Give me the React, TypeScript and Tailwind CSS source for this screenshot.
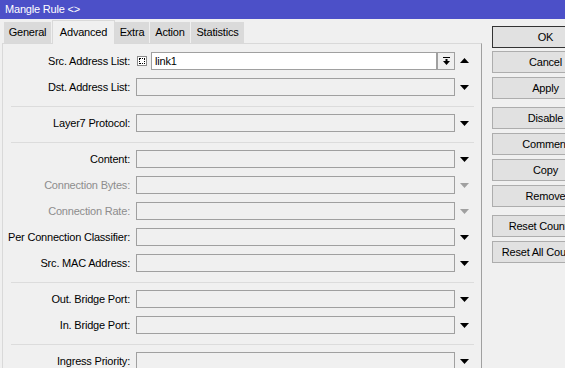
import { FC } from 'react';

type Row = { label: string; disabled?: boolean };

const sections: Row[][] = [
    [{ label: 'Layer7 Protocol:' }],
    [
        { label: 'Content:' },
        { label: 'Connection Bytes:', disabled: true },
        { label: 'Connection Rate:', disabled: true },
        { label: 'Per Connection Classifier:' },
        { label: 'Src. MAC Address:' },
    ],
    [{ label: 'Out. Bridge Port:' }, { label: 'In. Bridge Port:' }],
    [{ label: 'Ingress Priority:' }],
];

const buttons = [
    { text: 'OK', cls: 'mt-[7px] border-[#333333]' },
    { text: 'Cancel', cls: 'mt-[3px] border-[#adadad]' },
    { text: 'Apply', cls: 'mt-[4px] border-[#adadad]' },
    { text: 'Disable', cls: 'mt-[8px] border-[#adadad]' },
    { text: 'Comment', cls: 'mt-[4px] border-[#adadad]' },
    { text: 'Copy', cls: 'mt-[4px] border-[#adadad]' },
    { text: 'Remove', cls: 'mt-[4px] border-[#adadad]' },
    { text: 'Reset Counters', cls: 'mt-[8px] border-[#adadad]' },
    { text: 'Reset All Counters', cls: 'mt-[4px] border-[#adadad]' },
];

const tabs = [
    { text: 'General', w: 'w-[48px]' },
    { text: 'Advanced', w: 'w-[63px]', active: true },
    { text: 'Extra', w: 'w-[35px]' },
    { text: 'Action', w: 'w-[41px]' },
    { text: 'Statistics', w: 'w-[54px]' },
];

const Down: FC<{ grey?: boolean }> = ({ grey }) => (
    <svg width="9" height="5" viewBox="0 0 9 5" className="ml-[5px] mt-[1px] shrink-0">
        <polygon points="0,0 9,0 4.5,5" fill={grey ? '#a0a0a0' : '#000'} />
    </svg>
);

const Separator: FC = () => <div className="ml-[8px] w-[463px] h-px bg-[#dcdcdc] mt-[2px] -mb-px" />;

const Field: FC<Row> = ({ label, disabled }) => (
    <div className="flex items-center h-[18px]">
        <div className={`w-[127px] shrink-0 text-right whitespace-nowrap ${disabled ? 'text-[#8d8d8d]' : 'text-black'}`}>
            {label}
        </div>
        <div className="ml-[6px] w-[319px] shrink-0 h-[18px] border border-[#a0a0a0] bg-[#f0f0f0]" />
        <Down grey={disabled} />
    </div>
);

const App: FC = () => (
    <div className="w-[565px] h-[368px] overflow-hidden bg-[#f0f0f0] font-['Liberation_Sans',Arial,sans-serif] text-[11px] tracking-[-0.2px] text-black">
        <div className="h-[19px] bg-[#4c50c8] text-white pl-[5px] leading-[19px]">Mangle Rule &lt;&gt;</div>
        <div className="flex">
            <div className="ml-[2px] w-[480px] shrink-0">
                <div className="flex items-end h-[24px] pl-[2px]">
                    {tabs.map((t) =>
                        t.active ? (
                            <div
                                key={t.text}
                                className={`${t.w} h-[24px] -mb-px relative bg-[#f0f0f0] border border-b-0 border-[#d9d9d9] text-center leading-[22px]`}
                            >
                                {t.text}
                            </div>
                        ) : (
                            <div
                                key={t.text}
                                className={`${t.w} h-[21px] bg-[#dadada] border-r border-[#f0f0f0] text-center leading-[21px]`}
                            >
                                {t.text}
                            </div>
                        ),
                    )}
                </div>
                <div className="h-[330px] border border-[#d9d9d9] border-r-[#a0a0a0] pt-[8px] flex flex-col gap-2">
                    <div className="flex items-center h-[18px]">
                        <div className="w-[127px] shrink-0 text-right whitespace-nowrap">Src. Address List:</div>
                        <div className="ml-[7px] w-[10px] h-[10px] shrink-0 border border-[#8a8a8a] bg-white p-px">
                            <div className="w-full h-full border border-dotted border-black" />
                        </div>
                        <div className="ml-[4px] w-[286px] shrink-0 h-[18px] border border-[#a0a0a0] bg-white pl-[3px] leading-[16px]">
                            link1
                        </div>
                        <div className="w-[18px] h-[18px] shrink-0 border border-[#a0a0a0] flex items-center justify-center">
                            <svg width="7" height="8" viewBox="0 0 7 8">
                                <rect x="0" y="0" width="7" height="1" fill="#000" />
                                <rect x="2.5" y="2" width="2" height="3" fill="#000" />
                                <polygon points="0,4 7,4 3.5,8" fill="#000" />
                            </svg>
                        </div>
                        <svg width="9" height="5" viewBox="0 0 9 5" className="ml-[5px] -mt-px shrink-0">
                            <polygon points="0,5 9,5 4.5,0" fill="#000" />
                        </svg>
                    </div>
                    <Field label="Dst. Address List:" />
                    {sections.map((rows, i) => (
                        <div key={i} className="contents">
                            <Separator />
                            {rows.map((r) => (
                                <Field key={r.label} {...r} />
                            ))}
                        </div>
                    ))}
                </div>
            </div>
            <div className="ml-[10px] flex flex-col shrink-0">
                {buttons.map((b) => (
                    <div
                        key={b.text}
                        className={`${b.cls} w-[107px] h-[22px] border bg-[#e1e1e1] flex items-center justify-center whitespace-nowrap`}
                    >
                        {b.text}
                    </div>
                ))}
            </div>
        </div>
    </div>
);

export default App;
